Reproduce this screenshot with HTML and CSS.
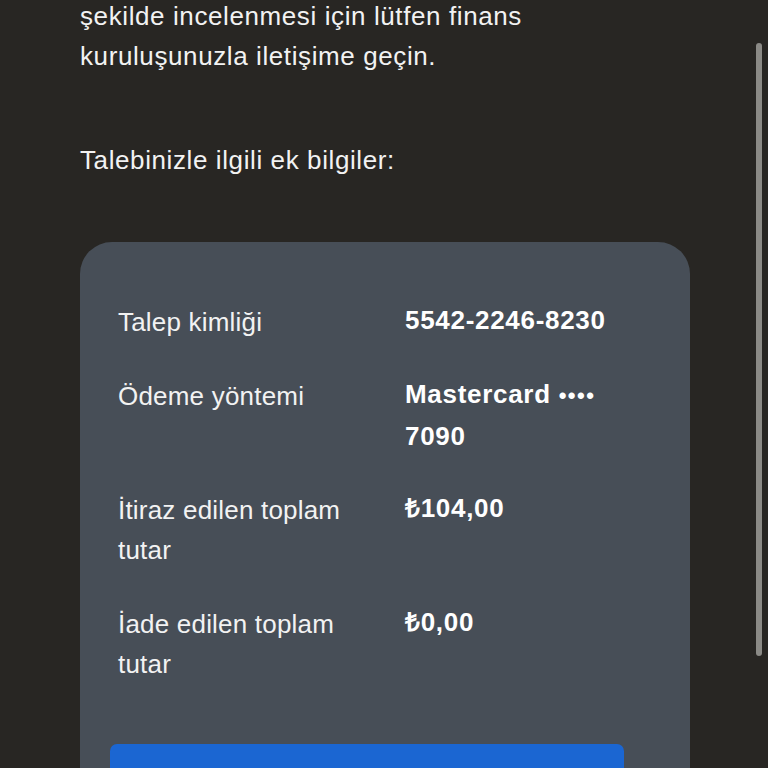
FILE: index.html
```html
<!DOCTYPE html>
<html lang="tr">
<head>
<meta charset="utf-8">
<link rel="stylesheet" href="styles.css">
</head>
<body>
<div class="page">
  <p class="para first">şekilde incelenmesi için lütfen finans<br>kuruluşunuzla iletişime geçin.</p>
  <p class="para second">Talebinizle ilgili ek bilgiler:</p>
  <div class="card">
    <div class="rows">
      <div class="label">Talep kimliği</div>
      <div class="value">5542-2246-8230</div>
      <div class="label">Ödeme yöntemi</div>
      <div class="value">Mastercard <span class="dots">••••</span> 7090</div>
      <div class="label">İtiraz edilen toplam tutar</div>
      <div class="value">₺104,00</div>
      <div class="label">İade edilen toplam tutar</div>
      <div class="value">₺0,00</div>
    </div>
    <div class="button"></div>
  </div>
</div>
<div class="scrollbar"></div>
</body>
</html>
```
FILE: styles.css
```css
html, body {
  margin: 0;
  padding: 0;
  background: #282623;
  height: 768px;
  overflow: hidden;
}
body {
  font-family: "Liberation Sans", Arial, sans-serif;
  color: #f2f2f2;
  font-size: 26px;
  letter-spacing: 0.6px;
  line-height: 40px;
}
.page {
  height: 768px;
  overflow: hidden;
  padding: 0 78px 0 80px;
}
.para {
  margin: 0;
}
.first {
  margin-top: -4px;
}
.second {
  margin-top: 64px;
}
.card {
  margin-top: 62px;
  background: #474e57;
  border-radius: 32px;
  padding: 60px 38px 40px 38px;
}
.rows {
  display: grid;
  grid-template-columns: 1fr 1fr;
  column-gap: 40px;
  row-gap: 34px;
}
.label {
  letter-spacing: 0.2px;
}
.value {
  font-weight: bold;
  color: #ffffff;
  letter-spacing: 0.7px;
  margin-top: -2px;
}
.dots {
  font-size: 22px;
  letter-spacing: 1.5px;
}
.button {
  margin-top: 60px;
  margin-right: 28px;
  margin-left: -8px;
  height: 56px;
  background: #1b66d2;
  border-radius: 7px;
}
.scrollbar {
  position: absolute;
  left: 756px;
  top: 43px;
  width: 6px;
  height: 613px;
  border-radius: 3px;
  background: #8b8a86;
}
```
